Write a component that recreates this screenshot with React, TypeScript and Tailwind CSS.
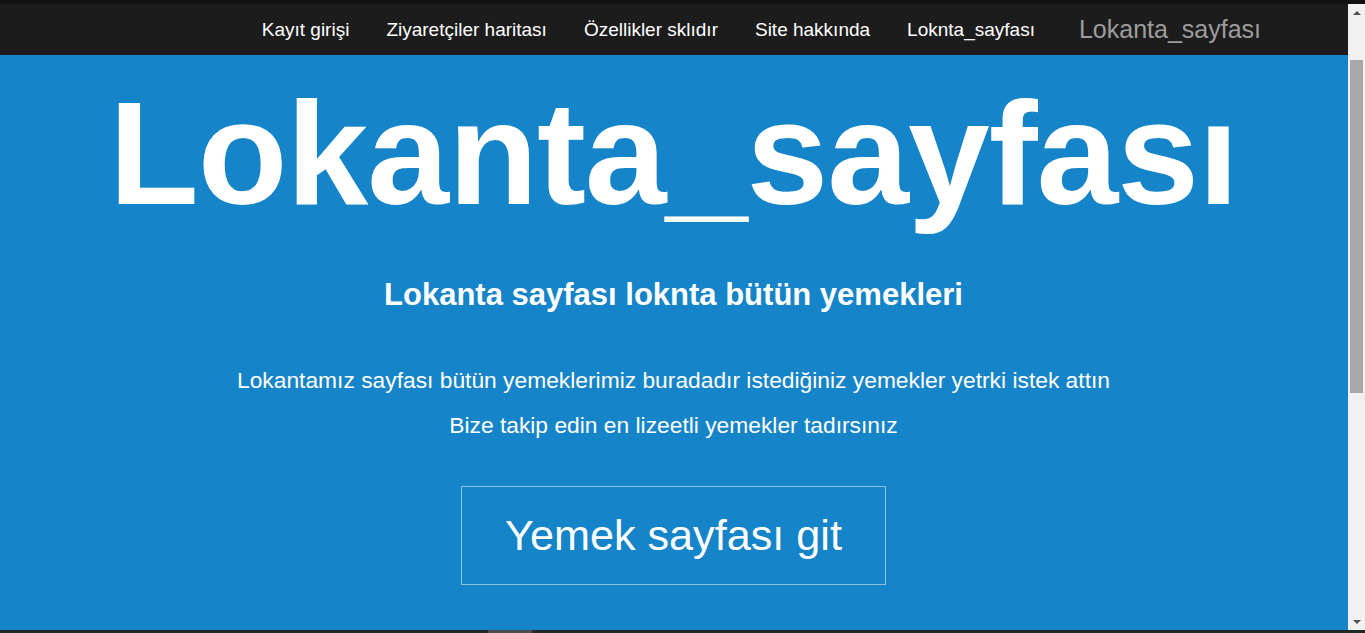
import React from "react";

const navItems = [
  "Kayıt girişi",
  "Ziyaretçiler haritası",
  "Özellikler sklıdır",
  "Site hakkında",
  "Loknta_sayfası",
];

export default function App() {
  return (
    <div
      className="w-[1365px] h-[633px] flex flex-col overflow-hidden bg-[#121214]"
      style={{ fontFamily: '"Liberation Sans", Arial, sans-serif' }}
    >
      <div className="h-[4px] bg-[#121214] shrink-0" />
      <div className="flex flex-1 min-h-0">
        <div className="flex-1 flex flex-col min-w-0">
          <nav className="h-[51px] shrink-0 bg-[#1c1c1c] flex items-center justify-end pr-[87px]">
            <ul className="flex items-center gap-[37px] text-[19px] text-white">
              {navItems.map((t) => (
                <li key={t} className="leading-none">
                  {t}
                </li>
              ))}
            </ul>
            <span className="ml-[44px] text-[25px] leading-none text-[#9d9d9d]">
              Lokanta_sayfası
            </span>
          </nav>
          <main className="flex-1 bg-[#1684c8] flex flex-col items-center pr-px text-white">
            <h1 className="mt-[25px] text-[147px] font-bold leading-none tracking-[-1px]">
              Lokanta_sayfası
            </h1>
            <h2 className="mt-[52px] text-[31px] font-bold leading-none">
              Lokanta sayfası loknta bütün yemekleri
            </h2>
            <div className="mt-[48px] text-[22.8px] leading-[45px] text-center">
              <p>
                Lokantamız sayfası bütün yemeklerimiz buradadır istediğiniz yemekler yetrki istek attın
              </p>
              <p>Bize takip edin en lizeetli yemekler tadırsınız</p>
            </div>
            <button className="mt-[38px] w-[425px] h-[99px] border border-white/50 text-[43.2px] leading-none text-white flex items-center justify-center">
              Yemek sayfası git
            </button>
          </main>
        </div>
        <div className="w-[17px] shrink-0 bg-[#f1f1f1] flex flex-col items-center">
          <div className="h-[17px] flex items-center justify-center">
            <div className="w-0 h-0 border-l-[4px] border-r-[4px] border-b-[4px] border-l-transparent border-r-transparent border-b-[#505050]" />
          </div>
          <div className="mt-[39px] w-[13px] h-[333px] bg-[#a8a8a8]" />
          <div className="flex-1" />
          <div className="h-[17px] flex items-center justify-center">
            <div className="w-0 h-0 border-l-[4px] border-r-[4px] border-t-[4px] border-l-transparent border-r-transparent border-t-[#505050]" />
          </div>
        </div>
      </div>
      <div className="h-[3px] shrink-0 bg-[#1f2925] flex">
        <div className="w-[488px]" />
        <div className="w-[44px] bg-[#4d4d4d]" />
        <div className="w-[3px] bg-[#2e2e2e]" />
      </div>
    </div>
  );
}
